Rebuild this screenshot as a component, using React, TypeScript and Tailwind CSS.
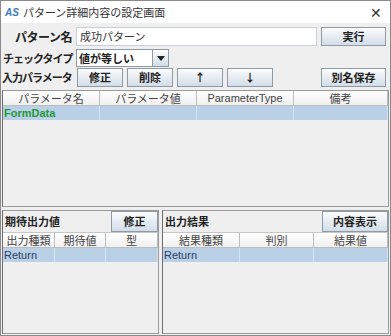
const jp = "font-['Noto_Sans_CJK_JP','Liberation_Sans',sans-serif]";

function Btn({ label, className = "" }: { label: string; className?: string }) {
  return (
    <div
      className={`flex items-center justify-center border border-[#8e9aa6] bg-gradient-to-b from-[#fbfcfd] to-[#d3dde8] text-[11px] font-bold text-[#222] ${className}`}
    >
      {label}
    </div>
  );
}

function HeaderCell({ label, className = "" }: { label: string; className?: string }) {
  return (
    <div
      className={`flex items-center justify-center border-r border-[#bdbdbd] text-[11px] text-[#444] ${className}`}
    >
      {label}
    </div>
  );
}

function Table({
  cols,
  first,
  green = false,
}: {
  cols: { label: string; w: string }[];
  first: string;
  green?: boolean;
}) {
  return (
    <div className="flex flex-col">
      <div className="flex h-[15px] border-b border-[#bdbdbd] bg-gradient-to-b from-white to-[#f0f0f0]">
        {cols.map((c) => (
          <HeaderCell key={c.label} label={c.label} className={c.w} />
        ))}
      </div>
      <div className="flex h-[14px] bg-[#b9d0e6]">
        {cols.map((c, i) => (
          <div
            key={c.label}
            className={`flex items-center border-r border-[#d6e2ee] ${c.w} ${
              i === 0 ? "pl-[1px]" : ""
            } ${green ? "font-bold text-[#1f9a3a]" : "text-[#2a3f66]"} text-[11px] font-['Liberation_Sans',sans-serif]`}
          >
            {i === 0 ? first : ""}
          </div>
        ))}
      </div>
    </div>
  );
}

export default function App() {
  return (
    <div className={`relative flex h-[336px] w-[391px] flex-col overflow-hidden border border-[#8a8a8a] bg-[#efefef] ${jp}`}>
      {/* Title bar */}
      <div className="flex h-[22px] shrink-0 items-center bg-white pl-[4px] pr-[8px]">
        <span className="mr-[4px] text-[10px] font-bold italic text-[#3b78c4] font-['Liberation_Sans',sans-serif]">AS</span>
        <span className="text-[11px] text-[#333]">パターン詳細内容の設定画面</span>
        <span className="ml-auto text-[14px] font-light text-[#333]">✕</span>
      </div>

      {/* Pattern name row */}
      <div className="mt-[4px] flex h-[19px] items-center pr-[4px]">
        <div className="w-[71px] whitespace-nowrap text-right text-[12px] font-bold tracking-[-0.5px] text-[#222]">パターン名</div>
        <div className="ml-[4px] flex h-[19px] flex-1 items-center border border-[#c9cfd6] bg-white pl-[3px] text-[11px] text-[#333]">
          成功パターン
        </div>
        <Btn label="実行" className="ml-[4px] h-[19px] w-[65px]" />
      </div>

      {/* Check type row */}
      <div className="mt-[3px] flex h-[18px] items-center">
        <div className="w-[71px] whitespace-nowrap pl-[2px] text-[11px] font-bold tracking-[-1px] text-[#222]">チェックタイプ</div>
        <div className="ml-[4px] flex h-[18px] w-[93px] border border-[#8e9aa6] bg-white">
          <div className="flex flex-1 items-center pl-[2px] text-[11px] font-bold text-[#222]">値が等しい</div>
          <div className="flex w-[16px] items-center justify-center border-l border-[#8e9aa6] bg-gradient-to-b from-[#fbfcfd] to-[#d3dde8]">
            <svg width="8" height="5" viewBox="0 0 8 5">
              <path d="M0 0 H8 L4 5 Z" fill="#222" />
            </svg>
          </div>
        </div>
      </div>

      {/* Input parameter row */}
      <div className="mt-[1px] flex h-[19px] items-center pr-[4px]">
        <div className="w-[73px] whitespace-nowrap pl-[1px] text-[11px] font-bold tracking-[-1px] text-[#222]">入力パラメータ</div>
        <div className="ml-[3px] flex gap-[4px]">
          <Btn label="修正" className="h-[19px] w-[46px]" />
          <Btn label="削除" className="h-[19px] w-[46px]" />
          <Btn label="↑" className="h-[19px] w-[46px]" />
          <Btn label="↓" className="h-[19px] w-[46px]" />
        </div>
        <Btn label="別名保存" className="ml-auto h-[19px] w-[65px]" />
      </div>

      {/* Parameter table */}
      <div className="mx-[1px] mt-[3px] h-[117px] border border-[#9a9a9a] border-l-[#6d6d6d]">
        <Table
          green
          first="FormData"
          cols={[
            { label: "パラメータ名", w: "w-[97px]" },
            { label: "パラメータ値", w: "w-[97px]" },
            { label: "ParameterType", w: "w-[97px] font-['Liberation_Sans',sans-serif]" },
            { label: "備考", w: "flex-1" },
          ]}
        />
      </div>

      {/* Bottom panels */}
      <div className="mx-[1px] mt-[3px] flex flex-1 gap-[3px] pb-[1px]">
        <div className="flex w-[157px] flex-col border border-[#9a9a9a] border-l-[#6d6d6d]">
          <div className="flex h-[22px] items-center border-b border-[#c7c7c7] pl-[2px]">
            <span className="text-[11px] font-bold text-[#222]">期待出力値</span>
            <Btn label="修正" className="ml-auto h-[21px] w-[47px]" />
          </div>
          <Table
            first="Return"
            cols={[
              { label: "出力種類", w: "w-[52px]" },
              { label: "期待値", w: "w-[51px]" },
              { label: "型", w: "flex-1" },
            ]}
          />
        </div>
        <div className="flex flex-1 flex-col border border-[#9a9a9a] border-l-[#6d6d6d]">
          <div className="flex h-[22px] items-center border-b border-[#c7c7c7] pl-[2px]">
            <span className="text-[11px] font-bold text-[#222]">出力結果</span>
            <Btn label="内容表示" className="ml-auto h-[21px] w-[66px]" />
          </div>
          <Table
            first="Return"
            cols={[
              { label: "結果種類", w: "w-[77px]" },
              { label: "判別", w: "w-[74px]" },
              { label: "結果値", w: "flex-1" },
            ]}
          />
        </div>
      </div>
    </div>
  );
}
